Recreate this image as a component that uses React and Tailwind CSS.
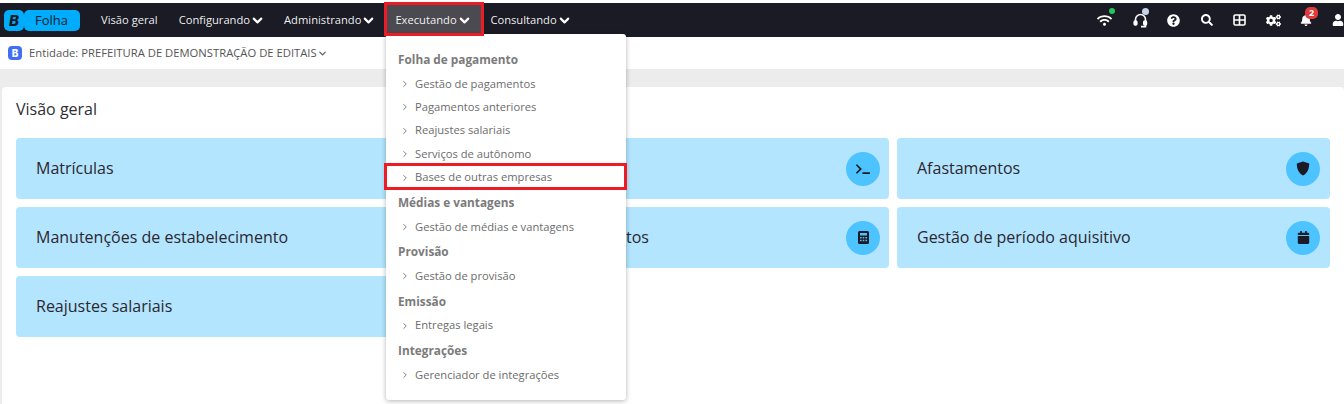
import React from "react";
import { ChevronDown, ChevronRight } from "lucide-react";
import { FaBell, FaUser, FaSearch, FaQuestionCircle, FaCogs, FaCalendar, FaTerminal, FaWifi } from "react-icons/fa";

const Nav = ({ label, chevron = true, cls = "" }) => (
  <div className={`flex items-center text-[11.2px] font-medium text-white/95 h-full ${cls}`}>
    <span>{label}</span>
    {chevron && <ChevronDown size={15} strokeWidth={3.4} className="text-white" />}
  </div>
);

const Group = ({ title, items, cls = "" }) => (
  <div className={cls}>
    <div className="pl-[12px] text-[11.8px] leading-[18px] font-bold text-[#7b7b7b]">{title}</div>
    {items.map((t, i) => (
      <div key={t} className={`flex items-center h-[23.4px] pl-[14px] text-[11.2px] text-[#6c6c6c] ${i === 0 ? "mt-[4.4px]" : ""}`}>
        <ChevronRight size={10} strokeWidth={2} className="text-[#666] mr-[5px]" />
        <span>{t}</span>
      </div>
    ))}
  </div>
);

const Card = ({ title, icon, cls = "pl-[20px]", pr = "pr-[10px]" }) => (
  <div className={`h-[61px] rounded-[4px] bg-[#b3e5fe] flex items-center justify-between ${cls} ${pr}`}>
    <span className="text-[16px] pb-[2px] text-[#2b2730]">{title}</span>
    {icon && (
      <span className="w-[34px] h-[34px] rounded-full bg-[#4dc3ff] flex items-center justify-center text-[#1a1b25]">{icon}</span>
    )}
  </div>
);

export default function App() {
  return (
    <div className="relative w-[1344px] h-[404px] overflow-hidden bg-[#ececec] font-['Open_Sans',sans-serif]">
      <div className="h-[3px] bg-white" />
      <header className="h-[34px] bg-[#1a1b25] flex items-center pl-[4px]">
        <div className="flex items-center h-[21px] w-[76px]">
          <span className="w-[20px] h-[21px] rounded-[5px] bg-[#00acfc] flex items-center justify-center text-[#1a1b25] font-['Inter',sans-serif] italic font-extrabold text-[15px] leading-none">B</span>
          <span className="w-[56px] h-[21px] rounded-[5px] bg-[#00acfc] pl-[11px] text-[13px] leading-[21px] font-medium text-[#14202c]">Folha</span>
        </div>
        <Nav label="Visão geral" chevron={false} cls="ml-[21px]" />
        <Nav label="Configurando" cls="ml-[21px]" />
        <Nav label="Administrando" cls="ml-[19px]" />
        <div className="ml-[9px] h-[34px] w-[96px] bg-[#4a4a50] flex items-center pl-[10px]">
          <Nav label="Executando" />
        </div>
        <Nav label="Consultando" cls="ml-[9px]" />
        <div className="ml-auto flex items-center text-white">
          <span className="relative w-[16px] flex justify-center">
            <FaWifi size={15} />
            <span className="absolute -top-[5px] -right-[3px] w-[6px] h-[6px] rounded-full bg-[#22c55e]" />
          </span>
          <span className="relative ml-[21px] w-[15px] flex justify-center">
            <svg width="15" height="15" viewBox="0 0 15 15" fill="none" stroke="#fff" strokeWidth="1.6">
              <path d="M2.5 8V6.5a5 5 0 0 1 10 0V8" />
              <rect x="1.2" y="8" width="2.6" height="4" rx="1" fill="#fff" />
              <rect x="10.8" y="8" width="2.6" height="4" rx="1" fill="#fff" />
              <path d="M12.5 12v1.6H8" />
            </svg>
            <span className="absolute -top-[5px] -right-[1px] w-[7px] h-[7px] rounded-full bg-[#c5d3e3]" />
          </span>
          <FaQuestionCircle size={13} className="ml-[19px]" />
          <FaSearch size={12} className="ml-[21px]" />
          <svg width="13" height="12" viewBox="0 0 13 12" className="ml-[20px]" fill="none" stroke="#fff" strokeWidth="1.6">
            <rect x="1" y="1" width="11" height="10" rx="1.2" />
            <path d="M1 6h11M6.5 1v10" />
          </svg>
          <FaCogs size={15} className="ml-[20px]" />
          <span className="relative ml-[19px]">
            <FaBell size={12} />
            <span className="absolute -top-[7px] left-[5px] w-[13px] h-[12px] rounded-[5px] bg-[#e03a3a] text-[9px] font-bold leading-[12px] text-center">2</span>
          </span>
          <FaUser size={12} className="ml-[20px]" />
        </div>
      </header>
      <div className="h-[32px] bg-white flex items-center pl-[8px]">
        <span className="w-[14px] h-[14px] rounded-[4px] bg-[#3f6ff2] text-white font-['Inter',sans-serif] font-extrabold text-[10px] leading-[14px] text-center">B</span>
        <span className="ml-[7px] text-[11.25px] text-[#555]">Entidade: PREFEITURA DE DEMONSTRAÇÃO DE EDITAIS</span>
        <ChevronDown size={11} strokeWidth={2.6} className="text-[#555]" />
      </div>
      <main className="mt-[18px] ml-[2px] h-[317px] bg-white rounded-t-[4px] px-[14px] pt-[11px]">
        <h1 className="text-[16px] leading-[22px] text-[#2f2f38] mb-[18px]">Visão geral</h1>
        <div className="grid grid-cols-[433px_432px_433px] gap-[8px]">
          <Card title="Matrículas" />
          <Card title="" pr="pr-[9px]" icon={<FaTerminal size={14} />} />
          <Card title="Afastamentos" icon={
            <svg width="14" height="15" viewBox="0 0 14 15" fill="currentColor"><path d="M7 0.5 13.2 2.6c0 5-1.4 9.4-6.2 11.9C2.2 12 0.8 7.6 0.8 2.6Z" /></svg>
          } />
          <Card title="Manutenções de estabelecimento" />
          <Card title="tos" cls="pl-[169px]" pr="pr-[9px]" icon={
            <svg width="11" height="13" viewBox="0 0 11 13">
              <rect width="11" height="13" rx="1.5" fill="currentColor" />
              <rect x="2" y="2" width="7" height="2.5" fill="#4dc3ff" />
              <path d="M2 6h1.6v1.4H2zM4.7 6h1.6v1.4H4.7zM7.4 6H9v1.4H7.4zM2 8.8h1.6v1.4H2zM4.7 8.8h1.6v1.4H4.7zM7.4 8.8H9v1.4H7.4z" fill="#4dc3ff" />
            </svg>
          } />
          <Card title="Gestão de período aquisitivo" icon={<FaCalendar size={13} />} />
          <Card title="Reajustes salariais" />
        </div>
      </main>

      <nav className="absolute left-[386px] top-[34px] w-[240px] h-[366px] bg-white rounded-[3px] shadow-[0_1px_5px_rgba(0,0,0,0.3)] pt-[16px]">
        <Group title="Folha de pagamento" items={["Gestão de pagamentos", "Pagamentos anteriores", "Reajustes salariais", "Serviços de autônomo", "Bases de outras empresas"]} />
        <Group cls="mt-[3.6px]" title="Médias e vantagens" items={["Gestão de médias e vantagens"]} />
        <Group cls="mt-[3.6px]" title="Provisão" items={["Gestão de provisão"]} />
        <Group cls="mt-[3.6px]" title="Emissão" items={["Entregas legais"]} />
        <Group cls="mt-[3.6px]" title="Integrações" items={["Gerenciador de integrações"]} />
      </nav>

      <div className="absolute left-[384px] top-[2px] w-[100px] h-[34px] border-[3px] border-[#ed1c24]" />
      <div className="absolute left-[384px] top-[163px] w-[243px] h-[27px] border-[3px] border-[#ed1c24]" />
    </div>
  );
}
